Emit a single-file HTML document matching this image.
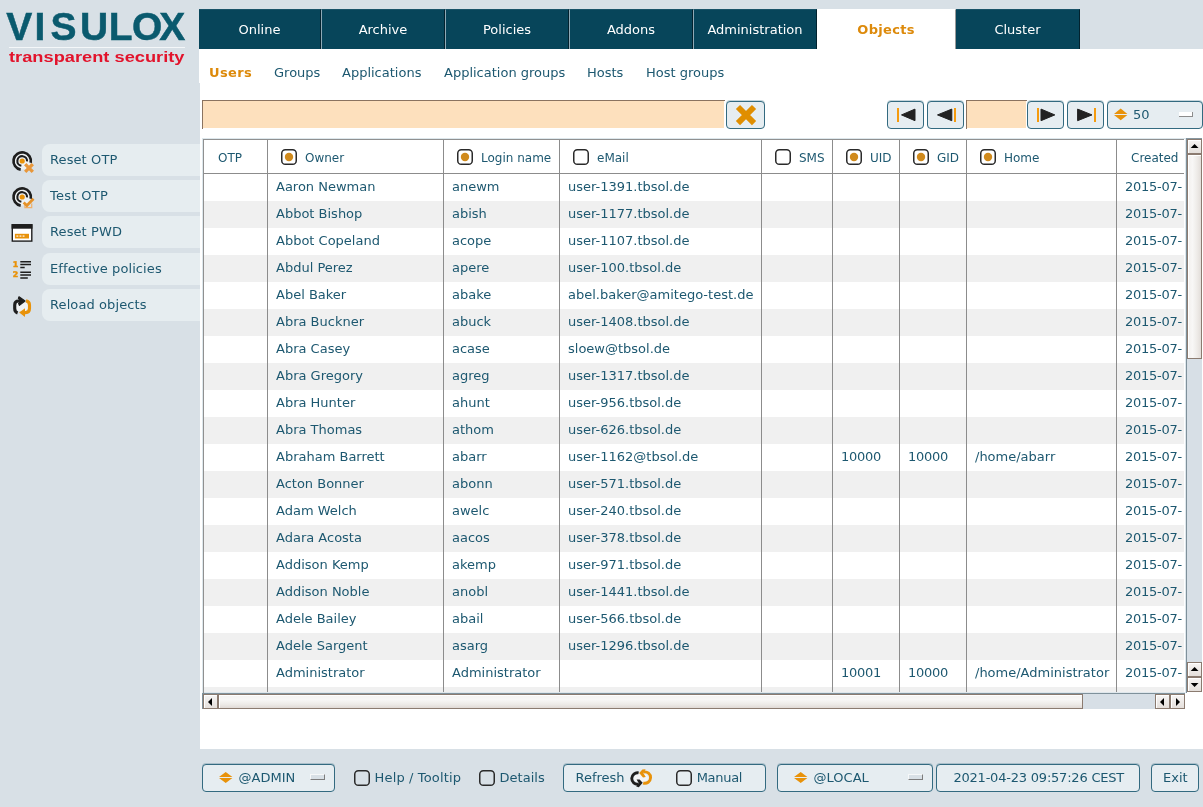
<!DOCTYPE html>
<html lang="en">
<head>
<meta charset="utf-8">
<title>VISULOX - Objects - Users</title>
<style>
html,body{margin:0;padding:0;}
body{width:1203px;height:807px;overflow:hidden;background:#d8e0e6;position:relative;will-change:transform;
 font-family:"DejaVu Sans","Liberation Sans",sans-serif;font-size:13px;color:#1d5870;}
.abs{position:absolute;}
#content{left:200px;top:49px;width:1003px;height:700px;background:#fff;}
#content2{left:199px;top:49px;width:2px;height:34px;background:#fff;}
/* top tabs */
.tab{position:absolute;top:9px;height:39px;width:122px;background:#07455a;color:#fff;
 border-left:1px solid #8fa9b5;border-right:1px solid #02222e;border-top:1px solid #1a5368;box-sizing:content-box;
 text-align:center;line-height:39px;font-size:13px;}
.tab.first{border-left:none;width:121px;}
.tab.act{background:#fff;color:#dd8a0b;font-weight:bold;letter-spacing:0.3px;border-left:none;border-right:1px solid #9a9a9a;border-top:1px solid #fff;}
/* sub tabs */
.sub{position:absolute;top:65px;font-size:13px;line-height:16px;white-space:nowrap;}
.sub.act{color:#dd8a0b;font-weight:bold;letter-spacing:0.4px;}
/* entries & buttons */
.entry{position:absolute;background:#fde0bd;border-top:1px solid #8a7360;border-left:1px solid #8a7360;box-shadow:inset -1px -1px 0 #fff;box-sizing:border-box;}
.btn{position:absolute;box-sizing:border-box;border:1px solid #336a80;border-radius:4px;background:#e6edf1;box-shadow:0 -1px 0 rgba(51,106,128,0.28);}
.btn svg{position:absolute;left:0;top:0;}
/* sidebar */
.sbtn{position:absolute;left:42px;width:158px;height:32px;background:#e6edf0;border-radius:8px 0 0 8px;
 line-height:32px;padding-left:8px;box-sizing:border-box;font-size:13px;white-space:nowrap;}
.sico{position:absolute;left:8px;width:30px;height:30px;}
/* table */
#tbl{left:203px;top:139px;width:983px;height:554px;overflow:hidden;background:#fff;}
.hdr{position:absolute;top:1px;height:33px;left:0;}
.row{position:absolute;left:1px;width:980px;height:27px;}
.row.g{background:#f0f0f0;}
.c{position:absolute;top:0;height:27px;line-height:25px;white-space:nowrap;font-size:13px;}
.vl{position:absolute;top:1px;width:1px;height:560px;background:#8c8c8c;}
.h{position:absolute;top:1px;height:33px;line-height:35px;font-size:12px;white-space:nowrap;}
.cb{position:absolute;width:16px;height:16px;}
/* scrollbars */
.sb{position:absolute;background:#d7dfe6;}
.sbb{position:absolute;box-sizing:border-box;border:1px solid #8b7b70;
 background:linear-gradient(#f7f5f4,#e4dfdb);box-shadow:inset 1px 1px 0 #fff;}
.sbb.v{background:linear-gradient(90deg,#f3f0ee,#f8f7f6 35%,#eeebe8 70%,#e2ddd9);}
.sbb.hh{background:linear-gradient(#f5f3f1,#f8f7f6 35%,#eeebe8 70%,#e0dad6);}
.sbb svg{position:absolute;left:0;top:0;}
/* bottom */
.bt{position:absolute;top:764px;height:28px;line-height:26px;font-size:13px;white-space:nowrap;}
.bcb{position:absolute;width:16px;height:16px;}
.ind2{position:absolute;width:15px;height:6px;box-sizing:border-box;background:#d8e0e6;border:1px solid #f6f8f9;border-right-color:#7d7d7d;border-bottom-color:#7d7d7d;}
.ind{position:absolute;width:14px;height:5px;box-sizing:border-box;background:#fff;border-right:1px solid #8c8c8c;border-bottom:1px solid #8c8c8c;}
</style>
</head>
<body>
<!-- LOGO -->
<svg class="abs" style="left:0;top:0" width="199" height="75" viewBox="0 0 199 75">
 <text transform="translate(0,40.4) scale(0.985,1)" x="6.39 35.11 51.21 81.15 110.54 134.01 161.67" y="0" font-family="Liberation Sans, sans-serif" font-weight="bold" font-size="39.6" fill="#0a5a6e" stroke="#0a5a6e" stroke-width="0.5">VISULOX</text>
 <rect x="9" y="47" width="176" height="1" fill="#f4f7f9"/>
 <text x="9" y="62" font-family="Liberation Sans, sans-serif" font-weight="bold" font-size="14.2" fill="#e2132b" textLength="175.5" lengthAdjust="spacingAndGlyphs">transparent security</text>
</svg>

<!-- CONTENT BG -->
<div id="content" class="abs"></div>
<div id="content2" class="abs"></div>

<!-- TABS -->
<div class="tab first" style="left:199px;">Online</div>
<div class="tab" style="left:321px;">Archive</div>
<div class="tab" style="left:445px;">Policies</div>
<div class="tab" style="left:569px;">Addons</div>
<div class="tab" style="left:693px;">Administration</div>
<div class="tab act" style="left:817px;width:138px;">Objects</div>
<div class="tab" style="left:956px;border-left:none;width:123px;">Cluster</div>

<!-- SUB TABS -->
<div class="sub act" style="left:209px;">Users</div>
<div class="sub" style="left:274px;">Groups</div>
<div class="sub" style="left:342px;">Applications</div>
<div class="sub" style="left:444px;">Application groups</div>
<div class="sub" style="left:587px;">Hosts</div>
<div class="sub" style="left:646px;">Host groups</div>

<!-- FILTER ROW -->
<div class="entry" style="left:202px;top:100px;width:523px;height:29px;"></div>
<div class="btn" style="left:726px;top:101px;width:39px;height:28px;">
 <svg width="37" height="26" viewBox="0 0 37 26"><path d="M10.95 5 L27.05 21.1 M27.05 5 L10.95 21.1" stroke="#e08e00" stroke-width="5.9" stroke-linecap="butt" fill="none"/></svg>
</div>
<div class="btn" style="left:887px;top:101px;width:37px;height:28px;">
 <svg width="35" height="26" viewBox="0 0 35 26"><rect x="9" y="6" width="2" height="14" fill="#f59b0e"/><path d="M13.5 12.9 L27 7.1 L27 18.7 Z" fill="#222" stroke="#222" stroke-width="1" stroke-linejoin="round"/></svg>
</div>
<div class="btn" style="left:927px;top:101px;width:37px;height:28px;">
 <svg width="35" height="26" viewBox="0 0 35 26"><rect x="26" y="6" width="2" height="14" fill="#f59b0e"/><path d="M9.5 12.9 L23.8 7.1 L23.8 18.7 Z" fill="#222" stroke="#222" stroke-width="1" stroke-linejoin="round"/></svg>
</div>
<div class="entry" style="left:966px;top:100px;width:61px;height:29px;"></div>
<div class="btn" style="left:1027px;top:101px;width:37px;height:28px;">
 <svg width="35" height="26" viewBox="0 0 35 26"><rect x="9" y="6" width="2" height="14" fill="#f59b0e"/><path d="M26.8 12.9 L13 7.1 L13 18.7 Z" fill="#222" stroke="#222" stroke-width="1" stroke-linejoin="round"/></svg>
</div>
<div class="btn" style="left:1067px;top:101px;width:37px;height:28px;">
 <svg width="35" height="26" viewBox="0 0 35 26"><rect x="26" y="6" width="2" height="14" fill="#f59b0e"/><path d="M24 12.9 L9.6 7.1 L9.6 18.7 Z" fill="#222" stroke="#222" stroke-width="1" stroke-linejoin="round"/></svg>
</div>
<div class="btn" style="left:1107px;top:101px;width:96px;height:28px;">
 <svg width="30" height="26" viewBox="0 0 30 26"><path d="M6 12 L12.7 6.6 L19.4 12 Z M6 12.9 L12.7 18.3 L19.4 12.9 Z" fill="#e8920a"/></svg>
 <span class="abs" style="left:25px;top:0;line-height:26px;font-size:13px;">50</span>
 <div class="ind" style="left:71px;top:10px;"></div>
</div>

<!-- TABLE -->
<div class="abs" style="left:202px;top:138px;width:984px;height:555px;border-top:1px solid #dde7ec;border-left:1px solid #dde7ec;box-sizing:border-box;"></div>
<div id="tbl" class="abs">
<div class="hdr" style="width:983px">
<div class="h" style="left:15px">OTP</div>
<svg class="cb" style="left:78px;top:9px" viewBox="0 0 16 16"><rect x="0.75" y="0.75" width="14.5" height="14.5" rx="3.6" fill="#fff" stroke="#2a2a2a" stroke-width="1.5"/><circle cx="8" cy="8" r="4.2" fill="#d08a1c"/></svg><div class="h" style="left:102px">Owner</div>
<svg class="cb" style="left:254px;top:9px" viewBox="0 0 16 16"><rect x="0.75" y="0.75" width="14.5" height="14.5" rx="3.6" fill="#fff" stroke="#2a2a2a" stroke-width="1.5"/><circle cx="8" cy="8" r="4.2" fill="#d08a1c"/></svg><div class="h" style="left:278px">Login name</div>
<svg class="cb" style="left:370px;top:9px" viewBox="0 0 16 16"><rect x="0.75" y="0.75" width="14.5" height="14.5" rx="3.6" fill="#fff" stroke="#2a2a2a" stroke-width="1.5"/></svg><div class="h" style="left:394px">eMail</div>
<svg class="cb" style="left:572px;top:9px" viewBox="0 0 16 16"><rect x="0.75" y="0.75" width="14.5" height="14.5" rx="3.6" fill="#fff" stroke="#2a2a2a" stroke-width="1.5"/></svg><div class="h" style="left:596px">SMS</div>
<svg class="cb" style="left:643px;top:9px" viewBox="0 0 16 16"><rect x="0.75" y="0.75" width="14.5" height="14.5" rx="3.6" fill="#fff" stroke="#2a2a2a" stroke-width="1.5"/><circle cx="8" cy="8" r="4.2" fill="#d08a1c"/></svg><div class="h" style="left:667px">UID</div>
<svg class="cb" style="left:710px;top:9px" viewBox="0 0 16 16"><rect x="0.75" y="0.75" width="14.5" height="14.5" rx="3.6" fill="#fff" stroke="#2a2a2a" stroke-width="1.5"/><circle cx="8" cy="8" r="4.2" fill="#d08a1c"/></svg><div class="h" style="left:734px">GID</div>
<svg class="cb" style="left:777px;top:9px" viewBox="0 0 16 16"><rect x="0.75" y="0.75" width="14.5" height="14.5" rx="3.6" fill="#fff" stroke="#2a2a2a" stroke-width="1.5"/><circle cx="8" cy="8" r="4.2" fill="#d08a1c"/></svg><div class="h" style="left:801px">Home</div>
<div class="h" style="left:928px">Created</div>
</div>
<div class="row" style="top:35px">
<span class="c" style="left:72px">Aaron Newman</span>
<span class="c" style="left:248px">anewm</span>
<span class="c" style="left:364px">user-1391.tbsol.de</span>
<span class="c" style="left:921px;letter-spacing:-0.25px">2015-07-</span>
</div>
<div class="row g" style="top:62px">
<span class="c" style="left:72px">Abbot Bishop</span>
<span class="c" style="left:248px">abish</span>
<span class="c" style="left:364px">user-1177.tbsol.de</span>
<span class="c" style="left:921px;letter-spacing:-0.25px">2015-07-</span>
</div>
<div class="row" style="top:89px">
<span class="c" style="left:72px">Abbot Copeland</span>
<span class="c" style="left:248px">acope</span>
<span class="c" style="left:364px">user-1107.tbsol.de</span>
<span class="c" style="left:921px;letter-spacing:-0.25px">2015-07-</span>
</div>
<div class="row g" style="top:116px">
<span class="c" style="left:72px">Abdul Perez</span>
<span class="c" style="left:248px">apere</span>
<span class="c" style="left:364px">user-100.tbsol.de</span>
<span class="c" style="left:921px;letter-spacing:-0.25px">2015-07-</span>
</div>
<div class="row" style="top:143px">
<span class="c" style="left:72px">Abel Baker</span>
<span class="c" style="left:248px">abake</span>
<span class="c" style="left:364px">abel.baker@amitego-test.de</span>
<span class="c" style="left:921px;letter-spacing:-0.25px">2015-07-</span>
</div>
<div class="row g" style="top:170px">
<span class="c" style="left:72px">Abra Buckner</span>
<span class="c" style="left:248px">abuck</span>
<span class="c" style="left:364px">user-1408.tbsol.de</span>
<span class="c" style="left:921px;letter-spacing:-0.25px">2015-07-</span>
</div>
<div class="row" style="top:197px">
<span class="c" style="left:72px">Abra Casey</span>
<span class="c" style="left:248px">acase</span>
<span class="c" style="left:364px">sloew@tbsol.de</span>
<span class="c" style="left:921px;letter-spacing:-0.25px">2015-07-</span>
</div>
<div class="row g" style="top:224px">
<span class="c" style="left:72px">Abra Gregory</span>
<span class="c" style="left:248px">agreg</span>
<span class="c" style="left:364px">user-1317.tbsol.de</span>
<span class="c" style="left:921px;letter-spacing:-0.25px">2015-07-</span>
</div>
<div class="row" style="top:251px">
<span class="c" style="left:72px">Abra Hunter</span>
<span class="c" style="left:248px">ahunt</span>
<span class="c" style="left:364px">user-956.tbsol.de</span>
<span class="c" style="left:921px;letter-spacing:-0.25px">2015-07-</span>
</div>
<div class="row g" style="top:278px">
<span class="c" style="left:72px">Abra Thomas</span>
<span class="c" style="left:248px">athom</span>
<span class="c" style="left:364px">user-626.tbsol.de</span>
<span class="c" style="left:921px;letter-spacing:-0.25px">2015-07-</span>
</div>
<div class="row" style="top:305px">
<span class="c" style="left:72px">Abraham Barrett</span>
<span class="c" style="left:248px">abarr</span>
<span class="c" style="left:364px">user-1162@tbsol.de</span>
<span class="c" style="left:637px;letter-spacing:-0.3px">10000</span>
<span class="c" style="left:704px;letter-spacing:-0.3px">10000</span>
<span class="c" style="left:771px">/home/abarr</span>
<span class="c" style="left:921px;letter-spacing:-0.25px">2015-07-</span>
</div>
<div class="row g" style="top:332px">
<span class="c" style="left:72px">Acton Bonner</span>
<span class="c" style="left:248px">abonn</span>
<span class="c" style="left:364px">user-571.tbsol.de</span>
<span class="c" style="left:921px;letter-spacing:-0.25px">2015-07-</span>
</div>
<div class="row" style="top:359px">
<span class="c" style="left:72px">Adam Welch</span>
<span class="c" style="left:248px">awelc</span>
<span class="c" style="left:364px">user-240.tbsol.de</span>
<span class="c" style="left:921px;letter-spacing:-0.25px">2015-07-</span>
</div>
<div class="row g" style="top:386px">
<span class="c" style="left:72px">Adara Acosta</span>
<span class="c" style="left:248px">aacos</span>
<span class="c" style="left:364px">user-378.tbsol.de</span>
<span class="c" style="left:921px;letter-spacing:-0.25px">2015-07-</span>
</div>
<div class="row" style="top:413px">
<span class="c" style="left:72px">Addison Kemp</span>
<span class="c" style="left:248px">akemp</span>
<span class="c" style="left:364px">user-971.tbsol.de</span>
<span class="c" style="left:921px;letter-spacing:-0.25px">2015-07-</span>
</div>
<div class="row g" style="top:440px">
<span class="c" style="left:72px">Addison Noble</span>
<span class="c" style="left:248px">anobl</span>
<span class="c" style="left:364px">user-1441.tbsol.de</span>
<span class="c" style="left:921px;letter-spacing:-0.25px">2015-07-</span>
</div>
<div class="row" style="top:467px">
<span class="c" style="left:72px">Adele Bailey</span>
<span class="c" style="left:248px">abail</span>
<span class="c" style="left:364px">user-566.tbsol.de</span>
<span class="c" style="left:921px;letter-spacing:-0.25px">2015-07-</span>
</div>
<div class="row g" style="top:494px">
<span class="c" style="left:72px">Adele Sargent</span>
<span class="c" style="left:248px">asarg</span>
<span class="c" style="left:364px">user-1296.tbsol.de</span>
<span class="c" style="left:921px;letter-spacing:-0.25px">2015-07-</span>
</div>
<div class="row" style="top:521px">
<span class="c" style="left:72px">Administrator</span>
<span class="c" style="left:248px">Administrator</span>
<span class="c" style="left:637px;letter-spacing:-0.3px">10001</span>
<span class="c" style="left:704px;letter-spacing:-0.3px">10000</span>
<span class="c" style="left:771px">/home/Administrator</span>
<span class="c" style="left:921px;letter-spacing:-0.25px">2015-07-</span>
</div>
<div class="row g" style="top:548px">
</div>
<div class="vl" style="left:64px"></div>
<div class="vl" style="left:240px"></div>
<div class="vl" style="left:356px"></div>
<div class="vl" style="left:558px"></div>
<div class="vl" style="left:629px"></div>
<div class="vl" style="left:696px"></div>
<div class="vl" style="left:763px"></div>
<div class="vl" style="left:913px"></div>
<div class="abs" style="left:0;top:34px;width:983px;height:1px;background:#8c8c8c"></div>
<div class="abs" style="left:0;top:0;width:1px;height:554px;background:#909090"></div>
<div class="abs" style="left:0;top:0;width:983px;height:1px;background:#909090"></div>
<div class="abs" style="left:981px;top:0;width:2px;height:554px;background:linear-gradient(90deg,#fff 50%,#dfe7ec 50%)"></div>
<div class="abs" style="left:1px;top:553px;width:982px;height:1px;background:#dfe7ec"></div>
</div>

<!-- SCROLLBARS -->
<div class="sb" style="left:1186px;top:138px;width:16px;height:555px;border-left:1px solid #7f919b;border-top:1px solid #8797a0;box-sizing:border-box"></div>
<div class="sbb" style="left:1187px;top:139px;width:15px;height:15px"><svg width="13" height="13" viewBox="0 0 13 13"><path d="M6.6 4 L10.5 8 L2.7 8 Z" fill="#000"/></svg></div>
<div class="sbb v" style="left:1187px;top:154px;width:15px;height:205px"></div>
<div class="sbb" style="left:1187px;top:662px;width:15px;height:15px"><svg width="13" height="13" viewBox="0 0 13 13"><path d="M6.6 4 L10.5 8 L2.7 8 Z" fill="#000"/></svg></div>
<div class="sbb" style="left:1187px;top:677px;width:15px;height:15px"><svg width="13" height="13" viewBox="0 0 13 13"><path d="M2.7 5 L10.5 5 L6.6 9 Z" fill="#000"/></svg></div>
<div class="abs" style="left:1187px;top:692px;width:16px;height:1px;background:#fff"></div>
<div class="sb" style="left:202px;top:693px;width:983px;height:16px;border-top:1px solid #7f919b;border-left:1px solid #7f919b;box-sizing:border-box"></div>
<div class="sbb" style="left:203px;top:694px;width:15px;height:15px"><svg width="13" height="13" viewBox="0 0 13 13"><path d="M8 3 L4 7 L8 11 Z" fill="#000"/></svg></div>
<div class="sbb hh" style="left:218px;top:694px;width:865px;height:15px"></div>
<div class="sbb" style="left:1155px;top:694px;width:15px;height:15px"><svg width="13" height="13" viewBox="0 0 13 13"><path d="M8 3 L4 7 L8 11 Z" fill="#000"/></svg></div>
<div class="sbb" style="left:1170px;top:694px;width:15px;height:15px"><svg width="13" height="13" viewBox="0 0 13 13"><path d="M5 3 L9 7 L5 11 Z" fill="#000"/></svg></div>

<!-- SIDEBAR -->
<svg class="sico" style="top:147px" viewBox="0 0 30 30"><circle cx="14.2" cy="14.0" r="8.6" fill="#eef2f4"/><path d="M22.71 15.81 A8.7 8.7 0 1 0 12.69 22.57" fill="none" stroke="#1e1e1e" stroke-width="2.7"/><path d="M19.03 14.42 A4.85 4.85 0 1 0 13.36 18.78" fill="none" stroke="#1e1e1e" stroke-width="2.1"/><circle cx="14.2" cy="14.0" r="2.6" fill="#e8920a"/><path d="M17.2 17.2 L24.8 24.8 M24.8 17.2 L17.2 24.8" stroke="#e8973a" stroke-width="3.3" fill="none"/></svg><div class="sbtn" style="top:144px;letter-spacing:0.1px">Reset OTP</div>
<svg class="sico" style="top:183px" viewBox="0 0 30 30"><circle cx="14.2" cy="14.0" r="8.6" fill="#eef2f4"/><path d="M22.71 15.81 A8.7 8.7 0 1 0 12.69 22.57" fill="none" stroke="#1e1e1e" stroke-width="2.7"/><path d="M19.03 14.42 A4.85 4.85 0 1 0 13.36 18.78" fill="none" stroke="#1e1e1e" stroke-width="2.1"/><circle cx="14.2" cy="14.0" r="2.6" fill="#e8920a"/><path d="M16.9 21.4 L16.9 24.7 L23.7 24.7 L23.7 20.6" stroke="#efb06a" stroke-width="1.2" fill="none"/><path d="M15.6 19.4 L18.9 22.5 L25.5 15.7" stroke="#e5922a" stroke-width="2.7" fill="none"/></svg><div class="sbtn" style="top:180px;letter-spacing:0.3px">Test OTP</div>
<svg class="sico" style="top:219px" viewBox="0 0 30 30"><rect x="4.3" y="5.8" width="19.5" height="16.3" fill="#fff" stroke="#1e1e1e" stroke-width="1.4"/><rect x="3.6" y="5.1" width="20.9" height="4.6" fill="#1e1e1e"/><rect x="6.9" y="14.8" width="14.1" height="4.7" fill="#e8920a"/><rect x="8.4" y="16.3" width="1.9" height="1.6" fill="#fbe3c0"/><rect x="11.5" y="16.3" width="1.9" height="1.6" fill="#fbe3c0"/><rect x="14.6" y="16.3" width="1.9" height="1.6" fill="#fbe3c0"/></svg><div class="sbtn" style="top:216px;letter-spacing:0.1px">Reset PWD</div>
<svg class="sico" style="top:256px" viewBox="0 0 30 30"><text x="4.7" y="10.8" font-family="DejaVu Sans, sans-serif" font-weight="bold" font-size="7.8" fill="#e8920a" stroke="#e8920a" stroke-width="0.5">1</text><text x="4.7" y="21.3" font-family="DejaVu Sans, sans-serif" font-weight="bold" font-size="7.8" fill="#e8920a" stroke="#e8920a" stroke-width="0.5">2</text><path d="M12.3 5.7 H23 M12.3 8.6 H23 M12.3 11.5 H16.7 M12.3 16.3 H23 M12.3 19.1 H23 M12.3 21.9 H19.8" stroke="#1e1e1e" stroke-width="1.5" fill="none"/></svg><div class="sbtn" style="top:253px;letter-spacing:0.1px">Effective policies</div>
<svg class="sico" style="top:292px" viewBox="0 0 30 30"><rect x="8.4" y="10.8" width="11.4" height="8.2" rx="2" fill="#f1f3f4"/><path d="M9.6 21 C7.2 20.2 6.7 18.6 6.7 16.6 L6.7 13 C6.7 10.4 8 9 10.6 9 L13 9" fill="none" stroke="#1e1e1e" stroke-width="3.1"/><path d="M11 4.8 L17 9 L11.4 13.4 L10.6 11.4 L13 9 L10.4 6.4 Z" fill="#1e1e1e" stroke="#1e1e1e" stroke-width="1.2" stroke-linejoin="round"/><path d="M18 8.8 C20.6 9.4 21.5 11 21.5 13 L21.5 16.6 C21.5 19.2 20.2 20.6 17.6 20.6 L15.4 20.6" fill="none" stroke="#e8920a" stroke-width="3.1"/><path d="M17 16.2 L11.2 20.6 L17 25 Z" fill="#e8920a"/></svg><div class="sbtn" style="top:289px;letter-spacing:0.1px">Reload objects</div>

<!-- BOTTOM -->
<div class="btn bt" style="left:202px;width:133px"><svg width="30" height="26" viewBox="0 0 30 26" class="abs" style="left:16px;top:0"><path d="M0 12.1 L6.7 7.1 L13.4 12.1 Z M0 12.9 L6.7 18 L13.4 12.9 Z" fill="#e8920a"/></svg><span class="abs" style="left:35.6px">@ADMIN</span><div class="ind2" style="left:107px;top:9px"></div></div>
<svg class="bcb" style="left:354px;top:770px" viewBox="0 0 16 16"><rect x="0.75" y="0.75" width="14.5" height="14.5" rx="3.6" fill="none" stroke="#2a2a2a" stroke-width="1.5"/></svg><div class="bt" style="left:374.6px;top:764px;line-height:28px;letter-spacing:0.14px">Help / Tooltip</div>
<svg class="bcb" style="left:479px;top:770px" viewBox="0 0 16 16"><rect x="0.75" y="0.75" width="14.5" height="14.5" rx="3.6" fill="none" stroke="#2a2a2a" stroke-width="1.5"/></svg><div class="bt" style="left:499.6px;top:764px;line-height:28px">Details</div>
<div class="btn bt" style="left:563px;width:203px"><span class="abs" style="left:11.5px">Refresh</span><svg width="28" height="26" viewBox="0 0 28 26" class="abs" style="left:64px;top:0"><ellipse cx="13" cy="13" rx="7" ry="4.6" fill="#f4f5f6"/><path d="M10.6 7.9 A5.7 5.7 0 1 0 10.4 19.1" fill="none" stroke="#1e1e1e" stroke-width="2.9"/><path d="M8.6 14.6 L11.6 14.4 L14.7 17.7 L10.8 22.2 L8.2 21.6 L10.6 18 Z" fill="#1e1e1e"/><path d="M15.2 18 A5.7 5.7 0 1 0 15.6 7" fill="none" stroke="#e8920a" stroke-width="2.9"/><path d="M17.6 4.2 L14.4 4.4 L11.2 8 L15 12.4 L17.8 12 L15.4 8.2 Z" fill="#e8920a"/></svg><svg class="bcb" style="left:112px;top:5px" viewBox="0 0 16 16"><rect x="0.75" y="0.75" width="14.5" height="14.5" rx="3.6" fill="none" stroke="#2a2a2a" stroke-width="1.5"/></svg><span class="abs" style="left:132.7px;letter-spacing:-0.3px">Manual</span></div>
<div class="btn bt" style="left:777px;width:156px"><svg width="30" height="26" viewBox="0 0 30 26" class="abs" style="left:16px;top:0"><path d="M0 12.1 L6.7 7.1 L13.4 12.1 Z M0 12.9 L6.7 18 L13.4 12.9 Z" fill="#e8920a"/></svg><span class="abs" style="left:35.6px">@LOCAL</span><div class="ind2" style="left:130px;top:9px"></div></div>
<div class="btn bt" style="left:936px;width:204px"><span class="abs" style="left:16.4px;letter-spacing:-0.21px">2021-04-23 09:57:26 CEST</span></div>
<div class="btn bt" style="left:1151px;width:48px"><span class="abs" style="left:11px">Exit</span></div>
</body>
</html>
